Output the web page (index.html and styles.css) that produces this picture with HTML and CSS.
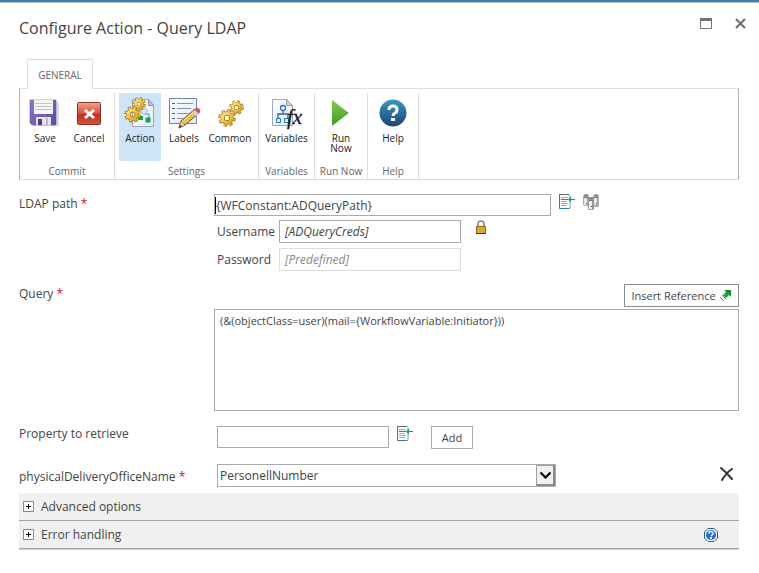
FILE: index.html
```html
<!DOCTYPE html>
<html lang="en">
<head>
<meta charset="utf-8">
<title>Configure Action - Query LDAP</title>
<link rel="stylesheet" href="styles.css">
</head>
<body>
<svg class="defs" aria-hidden="true">
  <defs>
    <linearGradient id="gold" x1="0" y1="0" x2="1" y2="1"><stop offset="0" stop-color="#ffe680"/><stop offset="1" stop-color="#e0a51c"/></linearGradient>
    <linearGradient id="red" x1="0" y1="0" x2="0" y2="1"><stop offset="0" stop-color="#f2a594"/><stop offset=".5" stop-color="#d54e3b"/><stop offset=".52" stop-color="#bd2f20"/><stop offset="1" stop-color="#d4513c"/></linearGradient>
    <linearGradient id="green" x1="0" y1="0" x2="0" y2="1"><stop offset="0" stop-color="#83c952"/><stop offset="1" stop-color="#3f9b24"/></linearGradient>
    <linearGradient id="blue" x1="0" y1="0" x2="0" y2="1"><stop offset="0" stop-color="#3599bd"/><stop offset="1" stop-color="#1f4379"/></linearGradient>
    <linearGradient id="purple" x1="0" y1="0" x2="1" y2="1"><stop offset="0" stop-color="#9478cf"/><stop offset="1" stop-color="#5c459c"/></linearGradient>
    <linearGradient id="paper" x1="0" y1="0" x2="1" y2="1"><stop offset="0" stop-color="#fff"/><stop offset="1" stop-color="#dfe8f3"/></linearGradient>
    <symbol id="gear" viewBox="0 0 20 20">
      <g fill="none" stroke="#97700f">
        <circle cx="10" cy="10" r="7.700" stroke-width="4" stroke-dasharray="3.400 2.648"/>
        <circle cx="10" cy="10" r="5" stroke-width="5"/>
      </g>
      <g fill="none" stroke="url(#gold)">
        <circle cx="10" cy="10" r="7.400" stroke-width="3" stroke-dasharray="2.200 3.612" stroke-dashoffset="-.6"/>
        <circle cx="10" cy="10" r="5" stroke-width="3.400"/>
      </g>
    </symbol>
    <symbol id="insert" viewBox="0 0 16 16">
      <path d="M.5.500h10l.5 1v13H.5z" fill="#fff" stroke="#a0a0a0"/>
      <path d="M.5 0v14.500H10" fill="none" stroke="#3478b5"/>
      <path d="M0 .5h10" stroke="#666"/>
      <path d="M2 3.500h7M2 7.500h6M2 9.500h7M2 11.500h6" stroke="#aaa"/>
      <path d="M2 5.500h7M10 5.500h6" stroke="#00a651"/>
      <path d="M9 5.500 12 2.500v6z" fill="#00a651"/>
    </symbol>
  </defs>
</svg>

<div class="dialog">
  <header class="titlebar">
    <h1>Configure Action - Query LDAP</h1>
    <div class="window-buttons">
      <button type="button" aria-label="Maximize"><svg width="12" height="11"><path d="M.5.500h11v10H.5z" fill="none" stroke="#737373"/><path d="M0 0h12v3H0z" fill="#737373"/></svg></button>
      <button type="button" aria-label="Close"><svg width="11" height="11"><path d="m1 1 9 9M10 1 1 10" stroke="#737373" stroke-width="2.200"/></svg></button>
    </div>
  </header>

  <nav class="tabs"><button type="button" class="tab">GENERAL</button></nav>

  <section class="ribbon">
    <div class="group commit">
      <div class="tools">
        <button type="button" class="tool">
          <svg viewBox="0 0 32 32"><path d="M3 5h25l2 2v23H5l-2-2z" fill="#bbb" opacity=".5"/><path d="M1 4h26v25H3l-2-2z" fill="url(#purple)" stroke="#6d59a8" stroke-width=".6"/><path d="M5 4h19v14H5z" fill="#f5f5f5"/><path d="M6 7.500h17M6 10.500h17M6 13.500h17" stroke="#c2c2c7"/><path d="M7 21h15v8H7z" fill="#e4e4eb"/><path d="M9 23h4v6H9z" fill="#513d85"/><path d="M17 22h2v7h-2z" fill="#bbbac7"/></svg>
          <span>Save</span></button>
        <button type="button" class="tool">
          <svg viewBox="0 0 32 32"><rect x="4.500" y="6.500" width="23" height="22" rx="1" fill="url(#red)" stroke="#8f3024"/><path d="m12 14 9 8m0-8-9 8" stroke="#fff" stroke-width="3"/></svg>
          <span>Cancel</span></button>
      </div>
      <div class="caption">Commit</div>
    </div>
    <div class="group settings">
      <div class="tools">
        <button type="button" class="tool active">
          <svg viewBox="0 0 32 32"><path d="M8.500 3.500h16l5 6v21h-21z" fill="url(#paper)" stroke="#9aa9bb"/><path d="M24.500 3.500v6h5z" fill="#b9c6d5" stroke="#8797aa"/><path d="M20 13v5h5v4M16 21h-4" fill="none" stroke="#548bb8"/><path d="m20 11 4 4-4 4-4-4z" fill="#c9e7f7" stroke="#70a9cf" stroke-width=".6"/><path d="M14 20h5v4h-5zM21.500 21.500h5v5h-5z" fill="#20a044"/><use href="#gear" x="8" y="1" width="14" height="14"/><use href="#gear" x="0" y="10" width="17" height="17"/></svg>
          <span>Action</span></button>
        <button type="button" class="tool">
          <svg viewBox="0 0 32 32"><path d="M1.500 2.500h27v25h-27z" fill="url(#paper)" stroke="#7187aa"/><path d="M4 7.500h3M4 12.500h3M4 17.500h3M4 22.500h3" stroke="#3b60a8"/><path d="M9 7.500h16M9 12.500h14M9 17.500h11M9 22.500h6" stroke="#7f93b8"/><path d="m11 32 2-7L27 13l4 4-14 12z" fill="#f0bc48" stroke="#765325"/><path d="m14 26 14-12" stroke="#ffe99c"/><path d="m25 15 4-3q3 0 3 4l-3 3z" fill="#d84d59" stroke="#a84954" stroke-width=".5"/><path d="m24 16 3-2 4 4-3 2z" fill="#cbd4db"/><path d="m11 32 2-7 4 4z" fill="#f5dfb2" stroke="#765325" stroke-width=".6"/><path d="m11 32 1-3 2 1z" fill="#333"/></svg>
          <span>Labels</span></button>
        <button type="button" class="tool">
          <svg viewBox="0 0 32 32"><use href="#gear" x="15" y="4" width="15" height="15"/><use href="#gear" x="4" y="13" width="18" height="18"/></svg>
          <span>Common</span></button>
      </div>
      <div class="caption">Settings</div>
    </div>
    <div class="group variables">
      <div class="tools">
        <button type="button" class="tool">
          <svg viewBox="0 0 32 32"><path d="M1.500 3.500h14l6 6v20h-20z" fill="url(#paper)" stroke="#9cabb9"/><path d="M15.500 3.500v6h6z" fill="#c7d2df" stroke="#8f9fae"/><path d="M12 14v4M7 22v-4h10v4" fill="none" stroke="#2f67a5" stroke-width="1.300"/><circle cx="12" cy="12" r="2.500" fill="#e6f4ff" stroke="#2974b8" stroke-width="1.300"/><path d="M5.500 22.500h4v4h-4zM13.500 22.500h4v4h-4z" fill="#e0eefb" stroke="#2974b8"/><text x="16" y="28" class="formula">fx</text></svg>
          <span>Variables</span></button>
      </div>
      <div class="caption">Variables</div>
    </div>
    <div class="group run">
      <div class="tools">
        <button type="button" class="tool">
          <svg viewBox="0 0 32 32"><path d="M7 4v26l17-13z" fill="url(#green)"/></svg>
          <span>Run Now</span></button>
      </div>
      <div class="caption">Run Now</div>
    </div>
    <div class="group help">
      <div class="tools">
        <button type="button" class="tool">
          <svg viewBox="0 0 32 32"><circle cx="16" cy="17" r="13.500" fill="url(#blue)"/><path d="M12 14q0-4 4-4t4 4q0 2-2 3t-2 3" fill="none" stroke="#fff" stroke-width="3"/><path d="M14 22h4v3h-4z" fill="#fff"/></svg>
          <span>Help</span></button>
      </div>
      <div class="caption">Help</div>
    </div>
  </section>

  <form class="form">
    <div class="row path-row">
      <label for="path">LDAP path <b>*</b></label>
      <div>
        <div class="line">
          <span class="path-box"><input id="path" type="text" value="{WFConstant:ADQueryPath}"></span>
          <button type="button" class="icon" aria-label="Insert reference"><svg width="16" height="16"><use href="#insert"/></svg></button>
          <button type="button" class="icon" aria-label="LDAP picker"><svg width="16" height="16"><path d="M0 2 2 0h3l1 2v10H2l-2-1zM10 2l2-2h2l2 2v10l-1 1h-5z" fill="#aaa"/><path d="M1 4h3v7H1zM11 4h3v7h-3z" fill="#e8e8e8"/><path d="M1 1.500h4M11 1.500h4M1 3.500h4M11 3.500h4" stroke="#777"/><path d="m5 4 1-1h4l1 1v11l-1 1H6l-1-1z" fill="#999"/><path d="M6 7h3v8H6z" fill="#eee"/><path d="M6 4.500h4M6 6.500h4" stroke="#777"/><path d="M3 9h1v1H3zM13 9h1v1h-1zM8 12h1v1H8z" fill="#d00"/></svg></button>
        </div>
        <div class="line credential">
          <label for="user">Username</label><input id="user" type="text" value="[ADQueryCreds]">
          <button type="button" class="icon lock" aria-label="Select credentials"><svg width="12" height="15"><path d="M3 7V4q0-3 3-3t3 3v3" fill="none" stroke="#888" stroke-width="1.700"/><path d="M1.500 6.500h9v7h-9z" fill="#dca638" stroke="#936619"/><path d="M1 13.500h10" stroke="#52390c"/></svg></button>
        </div>
        <div class="line credential">
          <label for="pass">Password</label><input id="pass" class="dim" type="text" value="[Predefined]" readonly>
        </div>
      </div>
    </div>

    <div class="row query-row">
      <label for="query">Query <b>*</b></label>
      <div class="query">
        <button type="button" class="push">Insert Reference <svg width="13" height="12"><path d="M5 0h7v7l-2-2-3 3-3-3 3-3z" fill="#279b35"/><path d="M7 1h4v4" fill="none" stroke="#176b23"/><path d="M3 5h1v1H3zM4 6h1v1H4zM5 7h1v1H5zM6 8h1v1H6zM1 7h1v1H1zM2 8h1v1H2zM3 9h1v1H3zM4 10h1v1H4z" fill="#279b35"/></svg></button>
        <textarea id="query">(&amp;(objectClass=user)(mail={WorkflowVariable:Initiator}))</textarea>
      </div>
    </div>

    <div class="row property-row">
      <label for="property">Property to retrieve</label>
      <div class="line inset">
        <input id="property" type="text">
        <button type="button" class="icon" aria-label="Insert reference"><svg width="16" height="16"><use href="#insert"/></svg></button>
        <button type="button" class="push add">Add</button>
      </div>
    </div>

    <div class="row office-row">
      <label for="office">physicalDeliveryOfficeName <b>*</b></label>
      <div class="line inset">
        <span class="select-box">
          <select id="office"><option>PersonellNumber</option></select>
          <svg class="arrow" width="19" height="21"><path d="M0 0h19v21H0z" fill="#f0f0f0"/><path d="M.5 21V.5H18" fill="none" stroke="#a0a0a0"/><path d="M18 0v20H1" fill="none" stroke="#696969" stroke-width="1.500"/><path d="m4.500 7.500 5 5 5-5" fill="none" stroke="#000" stroke-width="2.200"/></svg>
        </span>
        <button type="button" class="icon remove" aria-label="Remove"><svg width="14" height="14"><path d="M1 1q5 4 11 11M12 2Q6 6 2 13" fill="none" stroke="#333" stroke-width="2" stroke-linecap="round"/></svg></button>
      </div>
    </div>
  </form>

  <section class="panels">
    <div class="panel"><button type="button" class="expander"><svg width="11" height="11"><path d="M.5.500h10v10H.5z" fill="#fff" stroke="#888"/><path d="M3 5.500h5M5.500 3v5" stroke="#000"/></svg>Advanced options</button></div>
    <div class="panel"><button type="button" class="expander"><svg width="11" height="11"><path d="M.5.500h10v10H.5z" fill="#fff" stroke="#888"/><path d="M3 5.500h5M5.500 3v5" stroke="#000"/></svg>Error handling</button>
      <button type="button" class="icon" aria-label="Help on error handling"><svg width="14" height="14"><path d="M4 .5h6L13.500 4v6L10 13.500H4L.5 10V4z" fill="#f5faff" stroke="#235fa8"/><circle cx="7" cy="7" r="5" fill="#2869df"/><path d="M5 5.500q0-2 2-2t2 2q0 1-2 2.500" fill="none" stroke="#fff" stroke-width="1.500"/><path d="M6 9h2v2H6z" fill="#fff"/></svg></button></div>
  </section>
</div>
</body>
</html>
```
FILE: styles.css
```css
* { box-sizing: border-box; }
body {
  margin: 0;
  background: #fff;
  color: #444;
  font: 12px/18px "Open Sans", "Noto Sans", sans-serif;
}
button, input, textarea, select { font: inherit; color: inherit; }
button { padding: 0; border: 0; background: none; }
svg { display: block; flex: none; }
.defs { position: absolute; width: 0; height: 0; }
.dialog { border-top: 2px solid #3c80b5; padding: 0 20px 0 19px; box-shadow: inset 0 1px #bdbdbd; }

.titlebar { display: flex; justify-content: space-between; height: 57px; padding-top: 14px; }
h1 { margin: 0; font-size: 16px; line-height: 24px; font-weight: 400; }
.window-buttons { display: flex; gap: 23px; align-items: flex-start; margin-right: -7px; padding-top: 2px; }

.tabs { display: flex; padding-left: 8px; }
.tab {
  position: relative;
  z-index: 1;
  width: 66px;
  height: 30px;
  margin-bottom: -1px;
  border: 1px solid #ddd;
  border-bottom: 0;
  background: #fff;
  color: #666;
  font-size: 10px;
}

.ribbon {
  display: flex;
  height: 92px;
  border: 1px solid #ddd;
  border-left-color: #b3b3b3;
  border-right-color: #b3b3b3;
  font-size: 10px;
}
.group { display: flex; flex-direction: column; justify-content: space-between; margin-top: 4px; border-right: 1px solid #ddd; }
.commit { width: 95px; }
.settings { width: 144px; }
.variables { width: 56px; }
.run { width: 53px; }
.help { width: 51px; }
.tools { display: flex; justify-content: center; }
.tool {
  display: flex;
  flex-direction: column;
  align-items: center;
  gap: 5px;
  width: 44px;
  height: 68px;
  padding-top: 3px;
  line-height: 10px;
  color: #222;
}
.tool svg { width: 32px; height: 32px; overflow: visible; }
.formula { font: italic 21px "Liberation Serif", serif; fill: #151515; stroke: #151515; stroke-width: 0.3; }
.settings .tools { justify-content: flex-start; padding-left: 4px; }
.settings .tool { width: 46px; }
.settings .active { width: 42px; background: #cde5f7; }
.run .tool { width: 34px; }
.caption { color: #666; text-align: center; line-height: 16px; }

.row { display: grid; grid-template-columns: 195px minmax(0, 1fr); }
.row > label { line-height: 20px; white-space: nowrap; }
b { color: #c8141c; font-weight: 400; }
.line { display: flex; align-items: flex-start; gap: 8px; }
.inset { padding-left: 3px; }
input { height: 22px; border: 1px solid #ababab; padding: 0 5px; background: #fff; }
.icon { flex: none; }

.path-row { padding-top: 14px; }
.path-box { position: relative; display: flex; width: 337px; }
.path-box input { width: 100%; padding: 0 1px; }
.path-box::before { content: ""; position: absolute; left: 1px; top: 3px; width: 1px; height: 17px; background: #000; }
.credential { gap: 0; margin-top: 4px; padding-left: 3px; }
.credential label { width: 62px; line-height: 24px; }
.credential input { width: 182px; height: 23px; font-style: italic; }
.credential .dim { border-color: #ddd; color: #888; }
.lock { margin-left: 14px; }

.query-row { padding-top: 12px; }
.query { display: flex; flex-direction: column; align-items: flex-end; gap: 2px; }
.push { display: flex; align-items: center; justify-content: center; gap: 3px; height: 23px; border: 1px solid #8a8a9a; background: #fff; font-size: 11px; }
.query .push { width: 115px; }
textarea { display: block; width: 100%; height: 102px; padding: 2px 5px; border: 1px solid #ababab; resize: none; background: #fff; font-size: 11px; line-height: 18px; }
.property-row { padding-top: 15px; }
.property-row > label { line-height: 16px; }
.property-row input { width: 172px; }
.push.add { width: 42px; margin-left: 10px; border-color: #ababab; }
.office-row { padding-top: 15px; }
.office-row > label { line-height: 26px; }
.select-box { position: relative; display: flex; width: 339px; }
select { width: 100%; height: 23px; padding: 0 22px 0 2px; border: 1px solid #ababab; border-radius: 0; appearance: none; background: #fff; }
.arrow { position: absolute; right: 1px; top: 1px; pointer-events: none; }
.remove { margin: 3px 5px 0 auto; }

.panels { margin-top: 3px; border-bottom: 1px solid #ccc; }
.panel { display: flex; justify-content: space-between; align-items: center; height: 28px; padding: 0 21px 0 4px; border-bottom: 1px solid #a6a6a6; background: #f0f0f0; }
.expander { display: flex; align-items: center; gap: 7px; }
```
